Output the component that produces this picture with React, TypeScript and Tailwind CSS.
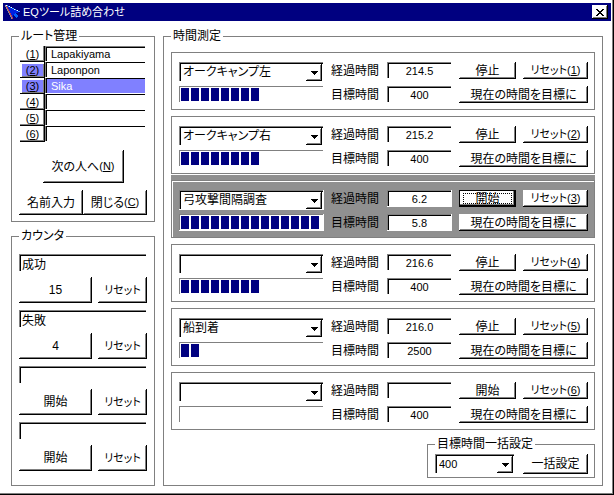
import type { ReactNode } from "react";

const sunken =
  "appearance-none rounded-none bg-white text-black outline-none shadow-[inset_-1px_-1px_#fff,inset_1px_1px_#808080,inset_2px_2px_#000]";
const raised =
  "flex items-center justify-center whitespace-nowrap bg-white text-black outline-none shadow-[inset_-1px_-1px_#000,inset_1px_1px_#fff,inset_-2px_-2px_#808080]";

function Button({ className = "", children }: { className?: string; children: ReactNode }) {
  return (
    <button type="button" className={`${raised} ${className}`}>
      {children}
    </button>
  );
}

function Key({ k }: { k: string | number }) {
  return (
    <span className="text-[11px]">
      (<span className="underline underline-offset-1">{k}</span>)
    </span>
  );
}

function Combo({ label, value, className = "" }: { label: string; value: string; className?: string }) {
  return (
    <div className={`relative h-5 ${className}`}>
      <select aria-label={label} className={`h-5 w-full pl-1 leading-4 ${sunken}`}>
        <option>{value}</option>
      </select>
      <span className={`pointer-events-none absolute top-0.5 right-0.5 h-[17px] w-4 ${raised}`}>
        <svg width="7" height="4" viewBox="0 0 7 4" shapeRendering="crispEdges">
          <path d="M0 0h7v1h-1v1h-1v1h-1v1h-1v-1h-1v-1h-1v-1h-1z" />
        </svg>
      </span>
    </div>
  );
}

function Group({ title, className = "", children }: { title: string; className?: string; children: ReactNode }) {
  return (
    <fieldset className={`min-w-0 border border-[#808080] ${className}`}>
      <legend className="h-4 px-0.5 leading-4">{title}</legend>
      {children}
    </fieldset>
  );
}

const members = ["Lapakiyama", "Laponpon", "Sika", "", "", ""];

function RouteGroup() {
  return (
    <Group title="ルート管理" className="px-[7px] pb-1.5">
      <div className="px-px pt-0.5">
        {members.map((name, i) => (
          <div key={i} className="flex h-4">
            <button
              type="button"
              className={`flex h-4 w-[25px] items-center justify-center outline-none ${
                i === 1 || i === 2
                  ? "bg-[#8080ff] shadow-[inset_-1px_-1px_#000,inset_2px_2px_#fff,inset_-2px_-2px_#808080]"
                  : "bg-white shadow-[inset_-1px_-1px_#000,inset_-2px_-2px_#808080]"
              }`}
            >
              <Key k={i + 1} />
            </button>
            <input
              aria-label={`名前 ${i + 1}`}
              defaultValue={name}
              className={`h-4 min-w-0 flex-1 appearance-none pl-1.5 text-[11px] leading-4 outline-none ${
                i === 0
                  ? "shadow-[inset_-1px_-1px_#fff,inset_1px_1px_#808080,inset_2px_2px_#000]"
                  : "shadow-[inset_-1px_-1px_#fff,inset_1px_0_#808080,inset_2px_1px_#000]"
              } ${i === 2 ? "bg-[#8080ff] text-white" : "bg-white"}`}
            />
          </div>
        ))}
      </div>
      <Button className="mx-auto mt-2 h-[33px] w-[81px]">
        次の人へ
        <Key k="N" />
      </Button>
      <div className="mt-[7px] flex">
        <Button className="h-[25px] flex-1">名前入力</Button>
        <Button className="h-[25px] flex-1">
          閉じる
          <Key k="C" />
        </Button>
      </div>
    </Group>
  );
}

const counters = [
  { name: "成功", value: "15" },
  { name: "失敗", value: "4" },
  { name: "", value: "開始" },
  { name: "", value: "開始" },
];

function CounterGroup() {
  return (
    <Group title="カウンタ" className="flex-1 px-[7px] pb-3.5">
      <div className="flex flex-col gap-[7px] pt-2.5">
        {counters.map((c, i) => (
          <div key={i}>
            <input aria-label={`カウンタ ${i + 1}`} defaultValue={c.name} className={`block h-[18px] w-full pl-[3px] leading-4 ${sunken}`} />
            <div className="mt-[5px] flex justify-between">
              <Button className="h-[26px] w-[73px]">{c.value}</Button>
              <Button className="h-[26px] w-[49px] text-[11px]">リセット</Button>
            </div>
          </div>
        ))}
      </div>
    </Group>
  );
}

const timers = [
  { name: "オークキャンプ左", elapsed: "214.5", goal: "400", chunks: 8, action: "停止" },
  { name: "オークキャンプ右", elapsed: "215.2", goal: "400", chunks: 8, action: "停止" },
  { name: "弓攻撃間隔調査", elapsed: "6.2", goal: "5.8", chunks: 14, action: "開始", active: true },
  { name: "", elapsed: "216.6", goal: "400", chunks: 8, action: "停止" },
  { name: "船到着", elapsed: "216.0", goal: "2500", chunks: 2, action: "停止" },
  { name: "", elapsed: "", goal: "400", chunks: 0, action: "開始" },
];

function TimerPanel({ timer, index }: { timer: (typeof timers)[number]; index: number }) {
  const active = timer.active;
  return (
    <section
      className={`grid grid-cols-[minmax(0,1fr)_49px_65px_57px_65px] grid-rows-[20px_17px] items-start gap-x-[7px] gap-y-1 border border-[#808080] pt-[9px] pr-1.5 pb-1.5 pl-[7px] ${
        active ? "bg-[#909090] shadow-[inset_1px_1px_#fff,0_-5px_#909090]" : ""
      }`}
    >
      <Combo label={`名称 ${index}`} value={timer.name} />
      <label htmlFor={`elapsed-${index}`} className="leading-[18px] whitespace-nowrap">
        経過時間
      </label>
      <input id={`elapsed-${index}`} defaultValue={timer.elapsed} className={`h-[17px] w-full text-center text-[11px] ${sunken}`} />
      {active ? (
        <button type="button" className="flex h-[17px] items-center justify-center border border-black bg-white shadow-[inset_-1px_-1px_#000,inset_-2px_-2px_#808080]">
          <span className="flex h-[11px] w-[49px] items-center justify-center border border-dotted border-black">{timer.action}</span>
        </button>
      ) : (
        <Button className="h-[17px]">{timer.action}</Button>
      )}
      <Button className="h-[17px] text-[11px]">
        リセット
        <Key k={index} />
      </Button>
      <div
        role="progressbar"
        aria-label={`進行 ${index}`}
        aria-valuenow={timer.chunks}
        aria-valuemax={14}
        className="flex h-[17px] gap-0.5 bg-white py-0.5 pl-0.5 shadow-[inset_-1px_-1px_#fff,inset_1px_1px_#808080]"
      >
        {Array.from({ length: timer.chunks }, (_, i) => (
          <span key={i} className="w-2 bg-[#000080]" />
        ))}
      </div>
      <label htmlFor={`goal-${index}`} className="leading-[18px] whitespace-nowrap">
        目標時間
      </label>
      <input id={`goal-${index}`} defaultValue={timer.goal} className={`h-[17px] w-full text-center text-[11px] ${sunken}`} />
      <Button className="col-span-2 h-[17px]">現在の時間を目標に</Button>
    </section>
  );
}

export default function App() {
  return (
    <div className="flex min-h-screen flex-col bg-white font-['Liberation_Sans','Noto_Sans_CJK_JP',sans-serif] text-xs text-black [font-feature-settings:'palt'] shadow-[inset_-1px_-1px_#000,inset_-2px_-2px_#808080]">
      <header className="mx-[3px] mt-[3px] flex h-[18px] items-center bg-[#000080] pr-[3px] pl-0.5 text-white">
        <svg width="16" height="16" viewBox="0 0 16 16" shapeRendering="crispEdges" aria-hidden="true">
          <path d="M1 1L15 8L10 9L13 12L11 14L8 11L7 15Z" fill="#0020e0" />
          <path d="M10 9L13 12L11 14L8 11Z" fill="#0060ff" />
          <path d="M0 1L7 15" stroke="#909090" fill="none" />
          <path d="M1 1L8 15" stroke="#c03050" fill="none" />
          <path d="M1 1L15 8" stroke="#40a0ff" fill="none" />
          <path d="M1 1L15 8" stroke="#ffffff" strokeDasharray="1 2" fill="none" />
        </svg>
        <h1 className="ml-0.5 flex-1 text-[11px] leading-4">EQツール詰め合わせ</h1>
        <button type="button" aria-label="閉じる" className={`h-3.5 w-4 ${raised}`}>
          <svg width="8" height="7" viewBox="0 0 8 7" shapeRendering="crispEdges">
            <path d="M0 0h2v1h1v1h2v-1h1v-1h2v1h-1v1h-1v1h-1v1h1v1h1v1h1v1h-2v-1h-1v-1h-2v1h-1v1h-2v-1h1v-1h1v-1h1v-1h-1v-1h-1v-1h-1z" />
          </svg>
        </button>
      </header>
      <main className="flex flex-1 gap-2 px-[11px] pt-[7px] pb-[9px]">
        <div className="flex w-36 flex-col gap-1.5">
          <RouteGroup />
          <CounterGroup />
        </div>
        <Group title="時間測定" className="flex-1 px-[7px] pb-[7px]">
          <div className="flex flex-col gap-1.5 pt-2">
            {timers.map((t, i) => (
              <TimerPanel key={i} timer={t} index={i + 1} />
            ))}
            <Group title="目標時間一括設定" className="w-[168px] self-end pr-1.5 pb-[3px] pl-[7px]">
              <div className="flex justify-between pt-0.5">
                <Combo label="一括目標時間" value="400" className="w-20 text-[11px]" />
                <Button className="h-5 w-[65px]">一括設定</Button>
              </div>
            </Group>
          </div>
        </Group>
      </main>
    </div>
  );
}
